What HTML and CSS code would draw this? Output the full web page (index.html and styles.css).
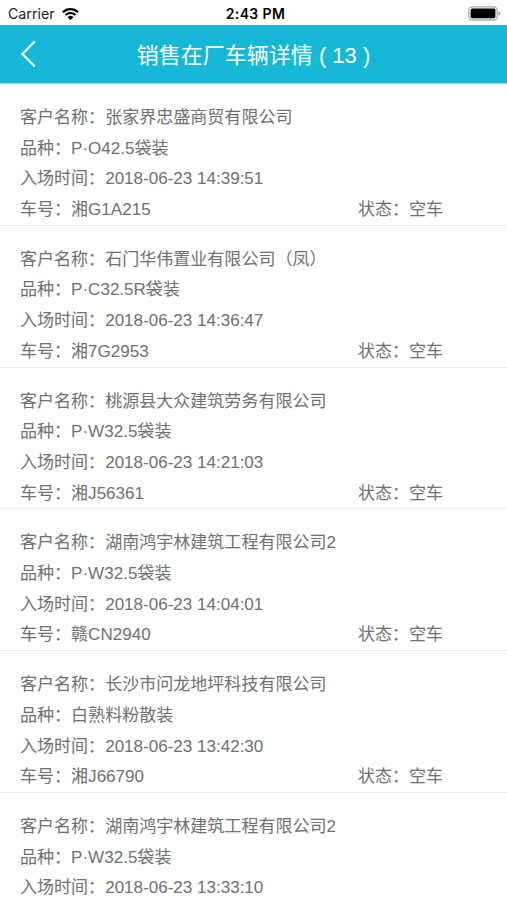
FILE: index.html
```html
<!DOCTYPE html>
<html lang="zh-CN">

<head>
    <meta charset="utf-8">
    <meta name="viewport" content="width=device-width, initial-scale=1.0">
    <title>销售在厂车辆详情</title>
    <link rel="stylesheet" href="styles.css">
</head>

<body>
    <div class="statusbar">
        <div class="carrier">
            <span>Carrier</span>
            <svg class="wifi" viewBox="0 0 17 12" width="17" height="12">
                <path d="M0.9 4.3 A10.8 10.8 0 0 1 16.1 4.3" fill="none" stroke="#000" stroke-width="2.2" />
                <path d="M3.5 7 A7.1 7.1 0 0 1 13.5 7" fill="none" stroke="#000" stroke-width="2" />
                <path d="M5.6 9.2 A4.1 4.1 0 0 1 11.4 9.2 L8.5 12 Z" fill="#000" />
            </svg>
        </div>
        <span class="time">2:43 PM</span>
        <svg class="battery" viewBox="0 0 33 15" width="33" height="15">
            <rect x="0.8" y="0.8" width="28.4" height="13.2" rx="3.6" fill="#fff" stroke="#aaa" stroke-width="1.3" />
            <rect x="2.6" y="2.6" width="24.8" height="9.6" rx="1.6" fill="#000" />
            <path d="M30.6 5.2 Q32.4 5.8 32.4 7.4 Q32.4 9 30.6 9.6 Z" fill="#999" />
        </svg>
    </div>

    <header>
        <svg class="back" viewBox="0 0 16 28" width="16" height="28">
            <path d="M14.8 1.4 L2.4 14 L14.8 26.6" fill="none" stroke="#fff" stroke-width="2.2" />
        </svg>
        <h1>销售在厂车辆详情 ( 13 )</h1>
    </header>

    <main>
        <article class="bil">
            <p>客户名称：张家界忠盛商贸有限公司</p>
            <p>品种：P·O42.5袋装</p>
            <p>入场时间：2018-06-23 14:39:51</p>
            <p class="sidste"><span>车号：湘G1A215</span><span class="status">状态：空车</span></p>
        </article>
        <article class="bil">
            <p>客户名称：石门华伟置业有限公司（凤）</p>
            <p>品种：P·C32.5R袋装</p>
            <p>入场时间：2018-06-23 14:36:47</p>
            <p class="sidste"><span>车号：湘7G2953</span><span class="status">状态：空车</span></p>
        </article>
        <article class="bil">
            <p>客户名称：桃源县大众建筑劳务有限公司</p>
            <p>品种：P·W32.5袋装</p>
            <p>入场时间：2018-06-23 14:21:03</p>
            <p class="sidste"><span>车号：湘J56361</span><span class="status">状态：空车</span></p>
        </article>
        <article class="bil">
            <p>客户名称：湖南鸿宇林建筑工程有限公司2</p>
            <p>品种：P·W32.5袋装</p>
            <p>入场时间：2018-06-23 14:04:01</p>
            <p class="sidste"><span>车号：赣CN2940</span><span class="status">状态：空车</span></p>
        </article>
        <article class="bil">
            <p>客户名称：长沙市问龙地坪科技有限公司</p>
            <p>品种：白熟料粉散装</p>
            <p>入场时间：2018-06-23 13:42:30</p>
            <p class="sidste"><span>车号：湘J66790</span><span class="status">状态：空车</span></p>
        </article>
        <article class="bil">
            <p>客户名称：湖南鸿宇林建筑工程有限公司2</p>
            <p>品种：P·W32.5袋装</p>
            <p>入场时间：2018-06-23 13:33:10</p>
        </article>
    </main>
</body>

</html>
```
FILE: styles.css
```css
* {
    box-sizing: border-box;
}

body {
    margin: 0;
    height: 900px;
    overflow: hidden;
    display: flex;
    flex-direction: column;
    background-color: #fff;
    color: #707070;
    font-family: "Liberation Sans", "Noto Sans CJK SC", sans-serif;
}

.statusbar {
    flex: none;
    height: 25px;
    padding: 2px 6px 0 8px;
    display: grid;
    grid-template-columns: 1fr auto 1fr;
    align-items: center;
    color: #222;
    font-family: Inter, sans-serif;
    font-size: 14.2px;
}

.carrier {
    display: flex;
    align-items: center;
    gap: 7px;
}

.time {
    padding-left: 2px;
    color: #000;
    font-size: 14px;
    font-weight: 600;
    letter-spacing: 0.4px;
}

.battery {
    justify-self: end;
}

header {
    flex: none;
    height: 59px;
    padding: 0 20px;
    display: grid;
    grid-template-columns: 16px 1fr 16px;
    align-items: center;
    background-color: #16b8d8;
    border-bottom: 1px solid #a4e5f2;
}

h1 {
    margin: 0;
    padding-bottom: 2px;
    color: #fff;
    text-align: center;
    font-size: 22px;
    font-weight: 400;
}

.bil {
    height: 141.8px;
    padding: 19px 20px 0;
    border-bottom: 1px solid #ebebeb;
}

.bil:last-child {
    border-bottom: none;
}

p {
    margin: 0;
    font-size: 17.05px;
    line-height: 30.65px;
    white-space: nowrap;
}

.sidste {
    display: flex;
}

.sidste span:first-child {
    flex: 1;
}

.status {
    width: 129px;
}
```
